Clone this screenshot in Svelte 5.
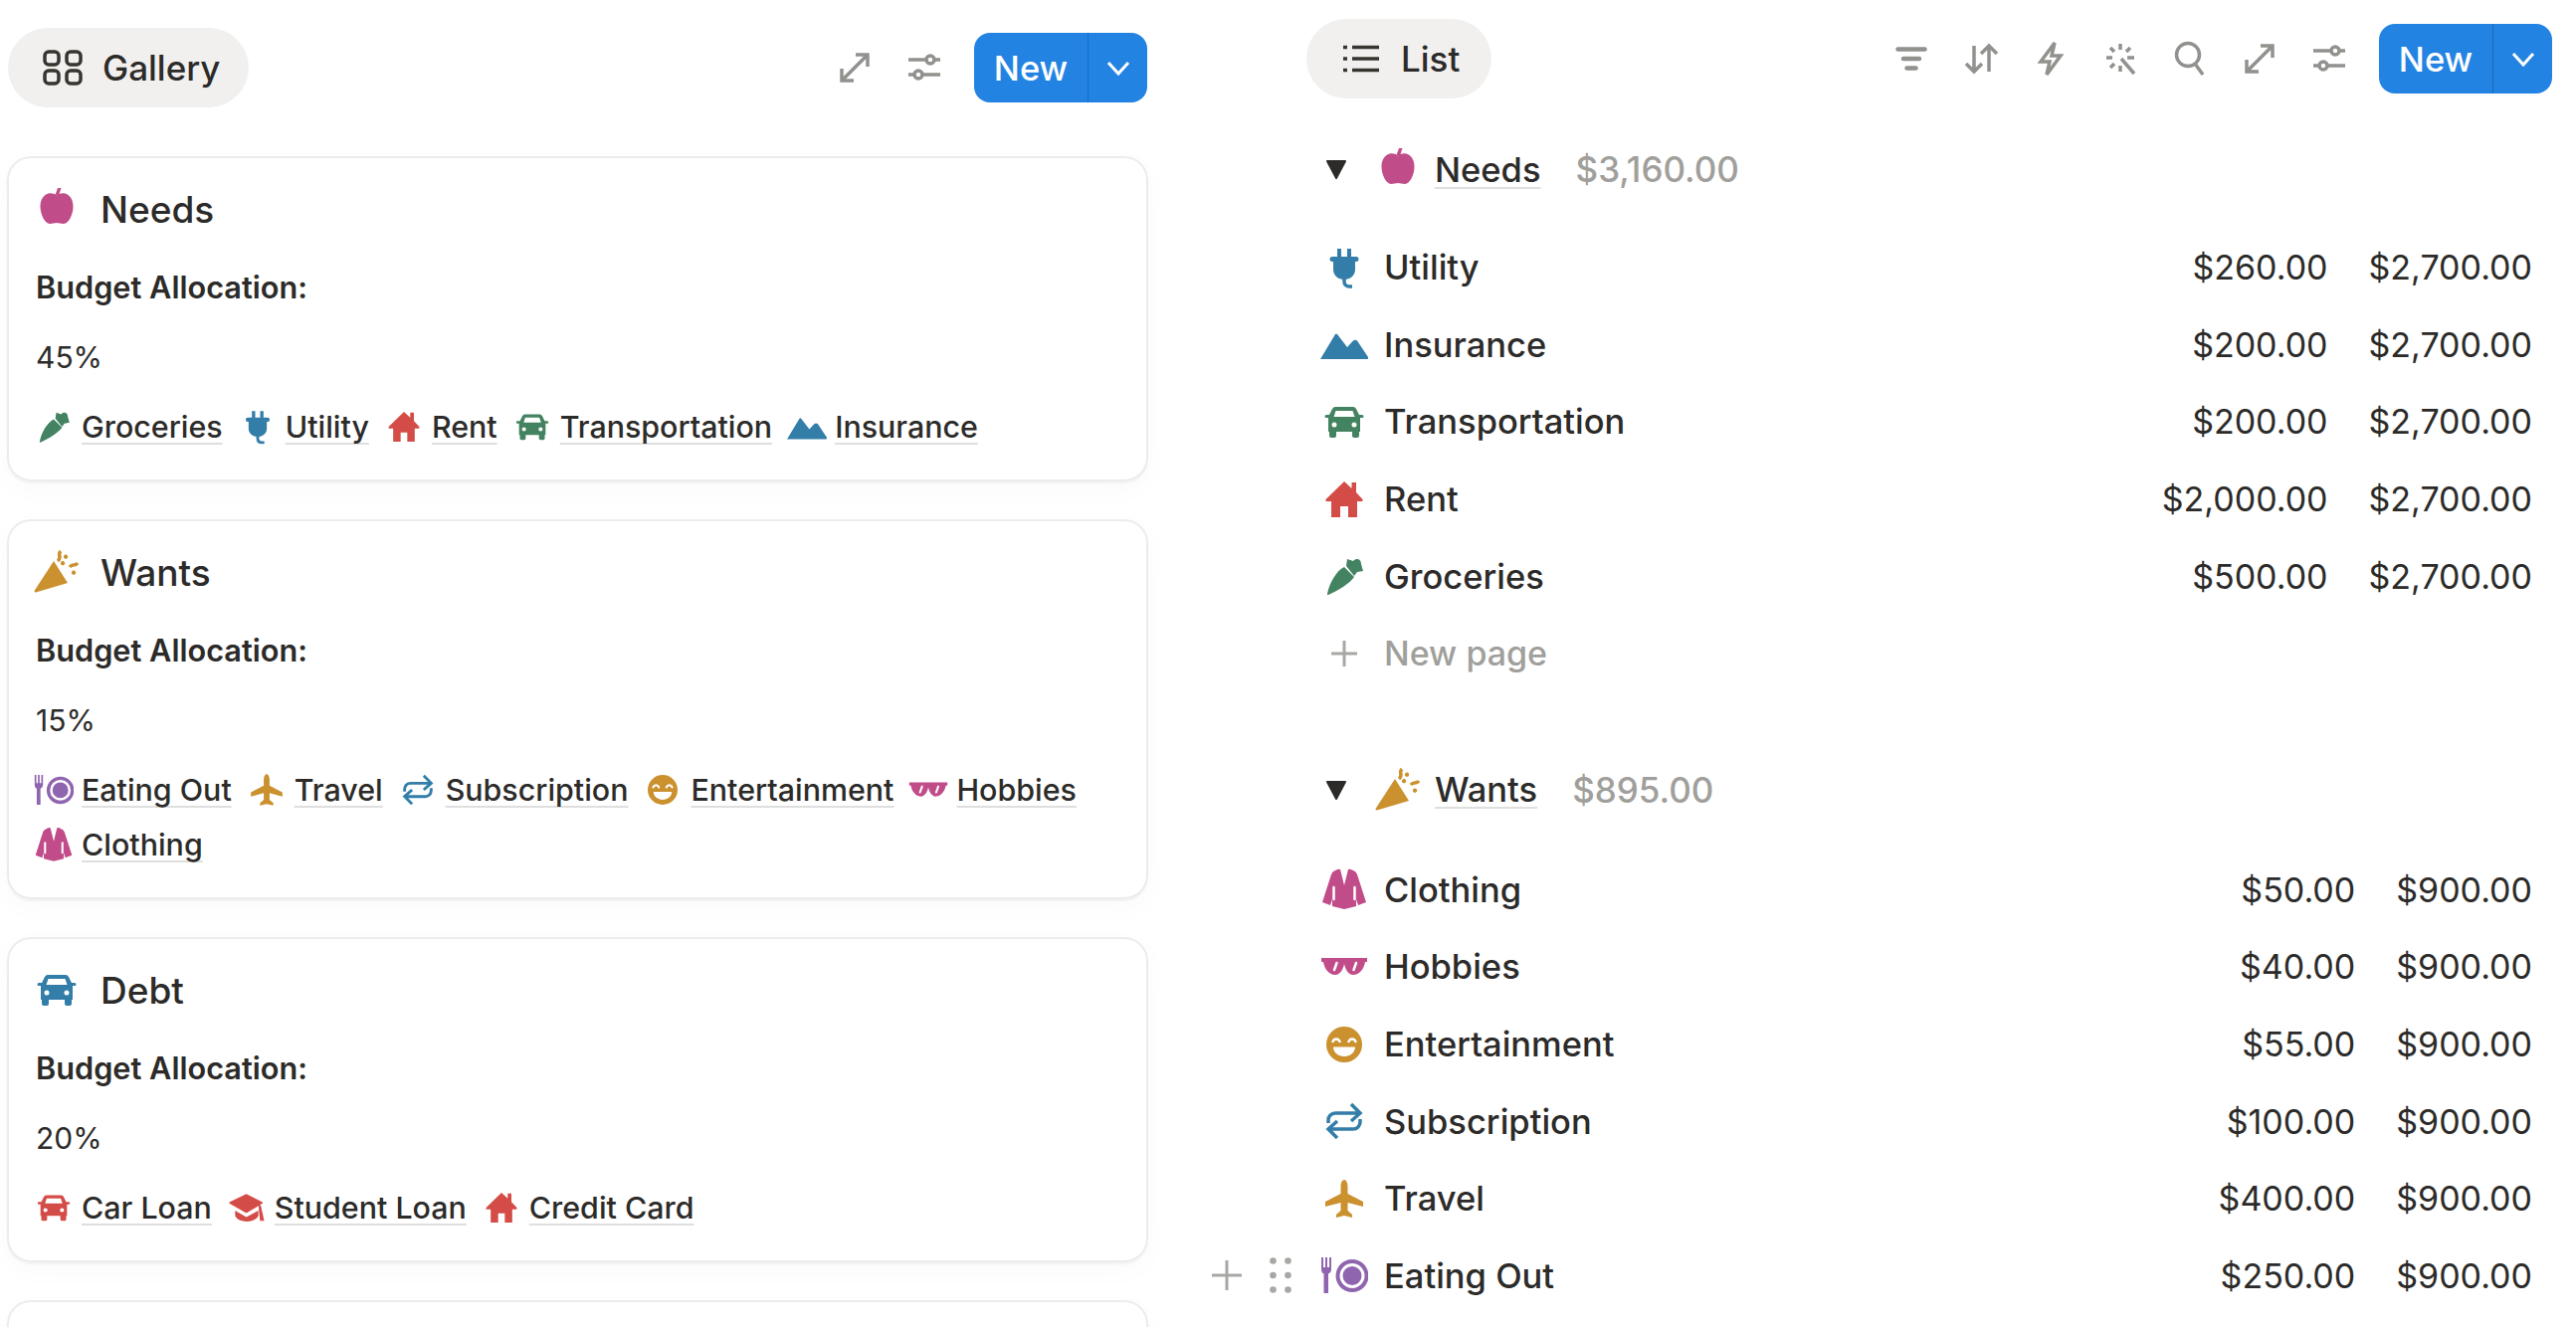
<script lang="ts">
  type Part = { d: string; kind?: "fill" | "line" | "white" };

  const ICONS: Record<string, Part[]> = {
    apple: [
      { d: "M24 10.500C21 8 16 7.500 12.500 10C8.500 13 7.500 17.500 7.500 22C7.500 29 12 39 17 39C20 39 21.500 38 24 38C26.500 38 28 39 31 39C36 39 40.500 29 40.500 22C40.500 17.500 39.500 13 35.500 10C32 7.500 27 8 24 10.500Z" },
      { d: "M22.500 10L25 3H28.500L26 10.500Z" },
    ],
    carrot: [
      { d: "M7 42C9 31 16 19 24 15L34 25C30 31 19 38 8 43C7 43 7 43 7 42Z" },
      { d: "M26 14L27 7L33 9C35 6 41 6 41 12L43 19L37 20L34 24Z" },
    ],
    plug: [
      { d: "M17 5H21V13H27V5H31V13H36A2 2 0 0 1 36 18H35V26C35 32 30 36 24 36C18 36 13 32 13 26V18H12A2 2 0 0 1 12 13H17Z" },
      { d: "M24 35V38C24 41 26 43 29 43H32", kind: "line" },
    ],
    mountains: [
      { d: "M0 39L15 14Q16 13 17 14L27 27L33 20.500Q35 19 37 20.500L48 37Q48.500 39 47 39Z" },
    ],
    car: [
      { d: "M15 9H33Q35 9 36 11L39 17H42Q43.500 17 43.500 18.500T42 20H40V34H39V38Q39 40 37 40H34Q32 40 32 38V34H16V38Q16 40 14 40H11Q9 40 9 38V34H8V20H6Q4.500 20 4.500 18.500T6 17H9L12 11Q13 9 15 9ZM15.500 13L13.500 19H34.500L32.500 13ZM14 24.500A2.500 2.500 0 1 0 14 29.500A2.500 2.500 0 1 0 14 24.500ZM34 24.500A2.500 2.500 0 1 0 34 29.500A2.500 2.500 0 1 0 34 24.500Z" },
    ],
    house: [
      { d: "M24 6L31.500 13V7H36V17L42.500 24V26H37V42H28V31H20V42H11V26H5.500V24Z" },
    ],
    popper: [
      { d: "M21 13L35 35L3 44.500C2 44.500 1.500 44 1.500 43Z" },
      { d: "M28 3C24 7 30 9 25 13M45 15C42 19 40 15 37 19", kind: "line" },
      { d: "M33 6.500a2.200 2.200 0 1 0 .1 0ZM41 22.500a2.200 2.200 0 1 0 .1 0ZM30 13a2.200 2.200 0 1 0 .1 0Z" },
    ],
    eating: [
      { d: "M1 6H3V16H5V6H7V16H9V6H11V18C11 21 9 22 8 22.500V42H3.500V22.500C2.500 22 1 21 1 18Z" },
      { d: "M32 8A16.500 16.500 0 1 0 32 41A16.500 16.500 0 1 0 32 8ZM32 12A12.500 12.500 0 1 1 32 37A12.500 12.500 0 1 1 32 12ZM32 15A9.500 9.500 0 1 0 32 34A9.500 9.500 0 1 0 32 15Z" },
    ],
    plane: [
      { d: "M24 5C26 5 27.500 8 27.500 12V19L43 27V32L27.500 28V36L32 40V43L24 41L16 43V40L20.500 36V28L5 32V27L20.500 19V12C20.500 8 22 5 24 5Z" },
    ],
    repeat: [
      { d: "M8 26V23A7 7 0 0 1 15 16H38M31 7L40 16L31 24M40 22V25A7 7 0 0 1 33 32H10M17 24L8 32L17 41", kind: "line" },
    ],
    smile: [
      { d: "M24 6A18 18 0 1 0 24 42A18 18 0 1 0 24 6ZM13 26.500H35C35 32 30 36 24 36C18 36 13 32 13 26.500Z" },
      { d: "M12.500 21C14 17.500 18 17.500 19.500 21M28.500 21C30 17.500 34 17.500 35.500 21", kind: "white" },
    ],
    glasses: [
      { d: "M1 15H47V19H45C44 26 39 32 33 32C28 32 25 26 24 21C23 26 20 32 15 32C9 32 4 26 3 19H1Z" },
      { d: "M16.500 20L14 27M36 20L33.500 27", kind: "white" },
    ],
    jacket: [
      { d: "M15 5Q19 3 20 4L24 20L28 4Q29 3 33 5Q36 6 37 9L46 37L38 40L36 34V41L24 44L12 41V34L10 40L2 37L11 9Q12 6 15 5Z" },
      { d: "M13.500 22V34M34.500 22V34", kind: "white" },
    ],
    cap: [
      { d: "M23.500 7.500L43 17.500V19L23.500 30.500L3 19V17.500Z" },
      { d: "M10 27.500L23.500 35.500L38 27.500V34C34 43 14 43 10 34Z" },
      { d: "M38 20L41 21.500L45 40H40Z" },
    ],
  };

  type Tag = { name: string; icon: string; tone: string };

  const tag = (name: string, icon: string, tone: string): Tag => ({ name, icon, tone });

  const cards = [
    {
      title: "Needs", icon: "apple", tone: "pink", pct: "45%",
      tags: [
        tag("Groceries", "carrot", "green"), tag("Utility", "plug", "blue"), tag("Rent", "house", "red"),
        tag("Transportation", "car", "green"), tag("Insurance", "mountains", "blue"),
      ],
    },
    {
      title: "Wants", icon: "popper", tone: "orange", pct: "15%",
      tags: [
        tag("Eating Out", "eating", "purple"), tag("Travel", "plane", "orange"), tag("Subscription", "repeat", "blue"),
        tag("Entertainment", "smile", "orange"), tag("Hobbies", "glasses", "pink"), tag("Clothing", "jacket", "pink"),
      ],
    },
    {
      title: "Debt", icon: "car", tone: "blue", pct: "20%",
      tags: [tag("Car Loan", "car", "red"), tag("Student Loan", "cap", "red"), tag("Credit Card", "house", "red")],
    },
  ];

  const groups = [
    {
      title: "Needs", icon: "apple", tone: "pink", sum: "$3,160.00", total: "$2,700.00", newPage: true,
      rows: [
        { ...tag("Utility", "plug", "blue"), amount: "$260.00" },
        { ...tag("Insurance", "mountains", "blue"), amount: "$200.00" },
        { ...tag("Transportation", "car", "green"), amount: "$200.00" },
        { ...tag("Rent", "house", "red"), amount: "$2,000.00" },
        { ...tag("Groceries", "carrot", "green"), amount: "$500.00" },
      ],
    },
    {
      title: "Wants", icon: "popper", tone: "orange", sum: "$895.00", total: "$900.00", newPage: false,
      rows: [
        { ...tag("Clothing", "jacket", "pink"), amount: "$50.00" },
        { ...tag("Hobbies", "glasses", "pink"), amount: "$40.00" },
        { ...tag("Entertainment", "smile", "orange"), amount: "$55.00" },
        { ...tag("Subscription", "repeat", "blue"), amount: "$100.00" },
        { ...tag("Travel", "plane", "orange"), amount: "$400.00" },
        { ...tag("Eating Out", "eating", "purple"), amount: "$250.00", hovered: true },
      ],
    },
  ];
</script>

{#snippet icon(name: string, tone: string, cls: string)}
  <svg class="ico {cls} {tone}" viewBox="0 0 48 48" aria-hidden="true">
    {#each ICONS[name] as part}
      <path d={part.d} class={part.kind ?? "fill"} fill-rule="evenodd" />
    {/each}
  </svg>
{/snippet}

{#snippet newButton()}
  <div class="new-btn">
    <span class="new-label">New</span>
    <span class="new-caret">
      <svg viewBox="0 0 24 24" class="chev"><path d="M2 7l10 11L22 7" /></svg>
    </span>
  </div>
{/snippet}

{#snippet tool(kind: string)}
  <svg class="tool" viewBox="0 0 40 40" aria-hidden="true">
    {#if kind === "filter"}
      <path d="M6.500 10.500H33.500M12 20H28M15.500 29.500H24.500" class="thick" />
    {:else if kind === "sort"}
      <path d="M13 7V33M5 25L13 33L21 25M28 33V7M20 15L28 7L36 15" />
    {:else if kind === "bolt"}
      <path d="M24 4L10 23H19L16 36L30 17H21Z" />
    {:else if kind === "wand"}
      <path d="M21 20L34 35M20 5V11M6 19H12M27 19H34M10 9L14 13M30 9L26 13M14 25L10 29M20 27V33" />
    {:else if kind === "search"}
      <circle cx="18" cy="16" r="11.500" />
      <path d="M25 25L33 36" />
    {:else if kind === "expand"}
      <path d="M7 33L33 7M21 7H33V19M7 21V33H19" />
    {:else}
      <path d="M4 12H36M4 27H36" />
      <circle cx="26" cy="12" r="4" class="knob" />
      <circle cx="14" cy="27" r="4" class="knob" />
    {/if}
  </svg>
{/snippet}

<div class="page">
  <section class="gallery">
    <header class="bar gallery-bar">
      <div class="pill gallery-pill">
        <svg class="view-ico" viewBox="0 0 40 36"><rect x="2" y="2" width="14" height="13" rx="4" /><rect x="24" y="2" width="14" height="13" rx="4" /><rect x="2" y="21" width="14" height="13" rx="4" /><rect x="24" y="21" width="14" height="13" rx="4" /></svg>
        <span>Gallery</span>
      </div>
      <div class="tools">
        {@render tool("expand")}
        {@render tool("sliders")}
        {@render newButton()}
      </div>
    </header>

    <div class="cards">
      {#each cards as card}
        <article class="card">
          <h3 class="card-title">
            {@render icon(card.icon, card.tone, "ico-big")}
            <span>{card.title}</span>
          </h3>
          <div class="card-label">Budget Allocation:</div>
          <div class="card-pct">{card.pct}</div>
          <div class="card-tags">
            {#each card.tags as t}
              <span class="card-tag">
                {@render icon(t.icon, t.tone, "ico-tag")}
                <span class="link">{t.name}</span>
              </span>
            {/each}
          </div>
        </article>
      {/each}
      <article class="card"></article>
    </div>
  </section>

  <section class="list">
    <header class="bar list-bar">
      <div class="pill list-pill">
        <svg class="view-ico list-ico" viewBox="0 0 36 28"><path d="M9 2.500H36M9 14H36M9 25.500H36" /><path d="M0 2.500H4M0 14H4M0 25.500H4" /></svg>
        <span>List</span>
      </div>
      <div class="tools">
        {@render tool("filter")}
        {@render tool("sort")}
        {@render tool("bolt")}
        {@render tool("wand")}
        {@render tool("search")}
        {@render tool("expand")}
        {@render tool("sliders")}
        {@render newButton()}
      </div>
    </header>

    {#each groups as group}
      <div class="group">
        <div class="group-head">
          <svg class="caret" viewBox="0 0 24 22"><path d="M3 3H21L12 20Z" /></svg>
          {@render icon(group.icon, group.tone, "ico-big")}
          <span class="link head-title">{group.title}</span>
          <span class="head-sum">{group.sum}</span>
        </div>
        <div class="rows">
          {#each group.rows as row}
            <div class="row">
              {#if row.hovered}
                <div class="row-handle">
                  <svg class="handle-plus" viewBox="0 0 32 32"><path d="M16 1V31M1 16H31" /></svg>
                  <svg class="handle-dots" viewBox="0 0 22 36">
                    {#each [3.500, 18, 32.500] as y}
                      <circle cx="3.500" cy={y} r="3.300" />
                      <circle cx="18.500" cy={y} r="3.300" />
                    {/each}
                  </svg>
                </div>
              {/if}
              {@render icon(row.icon, row.tone, "ico-row")}
              <span class="row-name">{row.name}</span>
              <span class="row-amount">{row.amount}</span>
              <span class="row-amount">{group.total}</span>
            </div>
          {/each}
          {#if group.newPage}
            <div class="row row-new">
              <svg class="new-plus" viewBox="0 0 48 48"><path d="M24 11V37M11 24H37" /></svg>
              <span class="row-name">New page</span>
            </div>
          {/if}
        </div>
      </div>
    {/each}
  </section>
</div>

<style>
  :global(body) {
    margin: 0;
    background: #fff;
  }

  .page {
    display: grid;
    grid-template-columns: 1168px 1fr;
    height: 1334px;
    overflow: hidden;
    font-family: Inter, "Liberation Sans", sans-serif;
    color: #2c2b29;
  }

  /* shared toolbar */
  .bar {
    display: flex;
    align-items: center;
    justify-content: space-between;
    height: 80px;
  }

  .pill {
    display: flex;
    align-items: center;
    height: 80px;
    box-sizing: border-box;
    border-radius: 40px;
    background: #f1f0ef;
    font-size: 35px;
    font-weight: 500;
  }

  .gallery-pill {
    width: 242px;
    padding-left: 35px;
    gap: 20px;
  }

  .list-pill {
    width: 186px;
    padding-left: 37px;
    gap: 22px;
  }

  .view-ico {
    width: 40px;
    height: 36px;
    fill: none;
    stroke: #37352f;
    stroke-width: 3.500;
  }

  .list-ico {
    width: 36px;
    height: 28px;
  }

  .tools {
    display: flex;
    align-items: center;
    gap: 30px;
  }

  .tool {
    width: 40px;
    height: 40px;
    fill: none;
    stroke: #91918e;
    stroke-width: 3.500;
  }

  .thick {
    stroke-width: 4.500;
    stroke-linecap: round;
  }

  .knob {
    fill: #fff;
  }

  .new-btn {
    display: flex;
    height: 70px;
    width: 174px;
    border-radius: 16px;
    overflow: hidden;
    background: #2383e2;
    color: #fff;
    font-size: 34.500px;
    font-weight: 500;
  }

  .new-label {
    display: flex;
    align-items: center;
    justify-content: center;
    width: 114px;
  }

  .new-caret {
    display: flex;
    align-items: center;
    justify-content: center;
    flex: 1;
    border-left: 1px solid rgba(0, 0, 0, 0.18);
  }

  .chev {
    width: 24px;
    height: 24px;
    fill: none;
    stroke: #fff;
    stroke-width: 3;
  }

  /* icon tones */
  .ico {
    flex: none;
  }

  .ico .fill {
    fill: currentColor;
  }

  .ico .line {
    fill: none;
    stroke: currentColor;
    stroke-width: 3.500;
  }

  .ico .white {
    fill: none;
    stroke: #fff;
    stroke-width: 2.500;
    stroke-linecap: round;
  }

  .pink { color: #c14c8a; }
  .green { color: #448361; }
  .blue { color: #337ea9; }
  .red { color: #d44c47; }
  .orange { color: #cb912f; }
  .purple { color: #9065b0; }

  .ico-big { width: 48px; height: 48px; }
  .ico-tag { width: 40px; height: 40px; }
  .ico-row { width: 48px; height: 48px; }

  .link {
    text-decoration: underline;
    text-decoration-color: rgba(55, 53, 47, 0.16);
    text-decoration-thickness: 2px;
    text-decoration-skip-ink: none;
    text-underline-offset: 5px;
  }

  /* gallery */
  .gallery {
    padding-left: 7px;
  }

  .gallery-bar {
    margin: 28px 0 0 1px;
    width: 1145px;
  }

  .cards {
    display: flex;
    flex-direction: column;
    gap: 38px;
    margin-top: 49px;
    width: 1147px;
  }

  .card {
    box-sizing: border-box;
    min-height: 300px;
    padding: 24px 27px 26px;
    border: 2px solid #ececeb;
    border-radius: 24px;
    box-shadow: 0 2px 2px rgba(15, 15, 15, 0.04), 0 8px 30px rgba(15, 15, 15, 0.025);
  }

  .card-title {
    display: flex;
    align-items: center;
    gap: 20px;
    margin: 0 0 0 -3px;
    height: 54px;
    font-size: 37px;
    font-weight: 500;
  }

  .card-label {
    margin-top: 28px;
    line-height: 48px;
    font-size: 30.700px;
    font-weight: 600;
  }

  .card-pct {
    margin-top: 22px;
    line-height: 48px;
    font-size: 30px;
  }

  .card-tags {
    display: flex;
    flex-wrap: wrap;
    column-gap: 15px;
    margin: 18px 0 0 -2px;
    font-size: 30.400px;
    font-weight: 500;
  }

  .card-tag {
    display: flex;
    align-items: center;
    gap: 8px;
    height: 55px;
  }

  /* list */
  .list {
    padding: 19px 24px 0 145px;
  }

  .group {
    margin-top: 45px;
  }

  .group + .group {
    margin-top: 72px;
  }

  .group + .group .rows {
    margin-top: 36px;
  }

  .group-head {
    display: flex;
    align-items: center;
    height: 52px;
    padding-left: 18px;
    font-size: 34.500px;
    font-weight: 500;
  }

  .caret {
    width: 24px;
    height: 22px;
    margin-right: 26px;
    fill: #2c2b29;
    stroke: #2c2b29;
    stroke-width: 2;
    stroke-linejoin: round;
  }

  .head-title {
    margin-left: 13px;
  }

  .head-sum {
    margin-left: 35px;
    font-size: 35px;
    color: #a09f9c;
  }

  .rows {
    margin-top: 34px;
  }

  .row {
    position: relative;
    display: flex;
    align-items: center;
    height: 77.600px;
    margin-left: 14px;
    padding-right: 20px;
    font-size: 34px;
    gap: 41px;
  }

  .row-name {
    flex: 1;
    margin-left: -25px;
    font-size: 34.500px;
    font-weight: 500;
  }

  .row-amount {
    font-weight: 400;
  }

  .row-handle {
    position: absolute;
    left: -110px;
    top: 50%;
    display: flex;
    align-items: center;
    gap: 27px;
    transform: translateY(-50%);
  }

  .handle-plus {
    width: 32px;
    height: 32px;
    fill: none;
    stroke: #a8a7a4;
    stroke-width: 3;
  }

  .handle-dots {
    width: 22px;
    height: 36px;
    fill: #a8a7a4;
  }

  .new-plus {
    flex: none;
    width: 48px;
    height: 48px;
    fill: none;
    stroke: #a8a7a4;
    stroke-width: 3;
  }

  .row-new {
    color: #a09f9c;
  }

  .row-new .row-name {
    font-size: 34px;
  }
</style>
